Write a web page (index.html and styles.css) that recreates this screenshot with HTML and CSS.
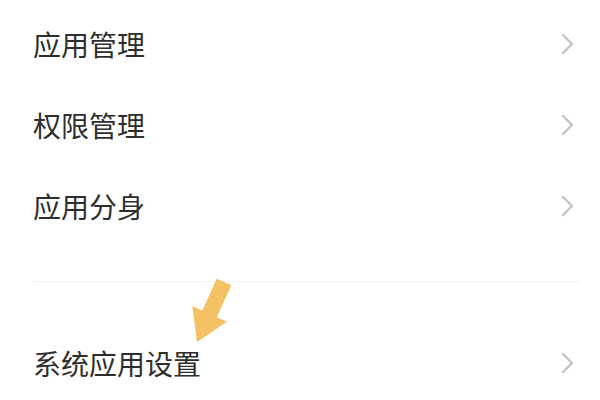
FILE: index.html
```html
<!DOCTYPE html>
<html lang="zh-CN">
<head>
<meta charset="utf-8">
<link rel="stylesheet" href="styles.css">
</head>
<body>
<div class="page">
  <div class="group first">
    <div class="row"><span class="label">应用管理</span><svg class="chev" viewBox="0 0 14 22" width="14" height="22"><path d="M2 2 L11 11 L2 20" fill="none" stroke="#c4c4c4" stroke-width="2.4" stroke-linecap="round" stroke-linejoin="round"/></svg></div>
    <div class="row"><span class="label">权限管理</span><svg class="chev" viewBox="0 0 14 22" width="14" height="22"><path d="M2 2 L11 11 L2 20" fill="none" stroke="#c4c4c4" stroke-width="2.4" stroke-linecap="round" stroke-linejoin="round"/></svg></div>
    <div class="row"><span class="label">应用分身</span><svg class="chev" viewBox="0 0 14 22" width="14" height="22"><path d="M2 2 L11 11 L2 20" fill="none" stroke="#c4c4c4" stroke-width="2.4" stroke-linecap="round" stroke-linejoin="round"/></svg></div>
  </div>
  <div class="divider"></div>
  <div class="group second">
    <div class="row"><span class="label">系统应用设置</span><svg class="chev" viewBox="0 0 14 22" width="14" height="22"><path d="M2 2 L11 11 L2 20" fill="none" stroke="#c4c4c4" stroke-width="2.4" stroke-linecap="round" stroke-linejoin="round"/></svg></div>
  </div>
  <svg class="arrow" viewBox="0 0 600 400" width="600" height="400"><polygon points="231.3,285.3 216.7,278.7 202.3,310.6 192.3,306.1 197,342 226.9,321.7 216.9,317.2" fill="#f4c264"/></svg>
</div>
</body>
</html>
```

FILE: styles.css
```css
html, body {
  margin: 0;
  padding: 0;
  background: #ffffff;
}
.page {
  position: relative;
  width: 600px;
  height: 400px;
  overflow: hidden;
  font-family: "Noto Sans CJK SC", "Noto Sans", sans-serif;
  color: #2e2e2e;
}
.group.first {
  padding-top: 3px;
}
.row {
  height: 81px;
  display: flex;
  align-items: center;
  justify-content: space-between;
  padding: 0 25px 0 33px;
}
.label {
  font-size: 28px;
  line-height: 1;
}
.chev {
  display: block;
}
.divider {
  height: 1px;
  background: #f2f2f2;
  margin: 35px 20px 40px 33px;
}
.arrow {
  position: absolute;
  left: 0;
  top: 0;
  pointer-events: none;
}
```
